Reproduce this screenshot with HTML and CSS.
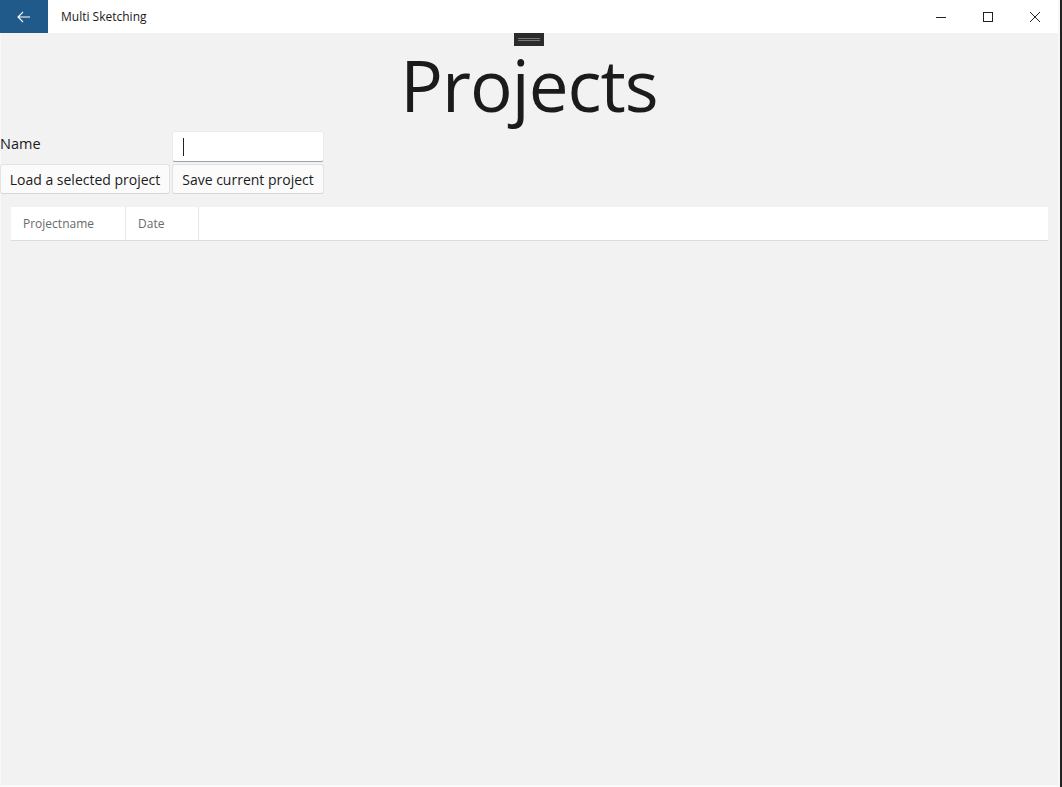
FILE: index.html
```html
<!DOCTYPE html>
<html lang="en">
<head>
    <meta charset="UTF-8">
    <title>Multi Sketching</title>
    <link rel="stylesheet" href="styles.css">
</head>
<body>
    <div class="window">
        <div class="titlebar">
            <div class="back-btn">
                <svg width="14" height="12" viewBox="0 0 14 12"><path d="M6 1L1 6l5 5M1 6h12" fill="none" stroke="#fff" stroke-width="1.1"/></svg>
            </div>
            <div class="app-title">Multi Sketching</div>
            <div class="controls">
                <div class="ctl"><svg width="12" height="12" viewBox="0 0 12 12"><path d="M1 6.5h10" stroke="#222" stroke-width="1"/></svg></div>
                <div class="ctl"><svg width="12" height="12" viewBox="0 0 12 12"><rect x="1.5" y="1.5" width="9" height="9" fill="none" stroke="#222" stroke-width="1"/></svg></div>
                <div class="ctl"><svg width="12" height="12" viewBox="0 0 12 12"><path d="M1 1l10 10M11 1L1 11" stroke="#222" stroke-width="1"/></svg></div>
            </div>
        </div>
        <div class="content">
            <div class="grip"><span></span></div>
            <h1 class="heading">Projects</h1>
            <div class="form">
                <label class="name-label" for="projectName">Name</label>
                <div class="text-input"><span class="caret"></span></div>
                <button class="btn">Load a selected project</button>
                <button class="btn">Save current project</button>
            </div>
            <div class="grid-header">
                <div class="col col-name">Projectname</div>
                <div class="col col-date">Date</div>
                <div class="col col-rest"></div>
            </div>
        </div>
    </div>
</body>
</html>
```

FILE: styles.css
```css
html, body {
    margin: 0;
    padding: 0;
    height: 100%;
    background: #222;
}
.window {
    width: 1058px;
    height: 785px;
    background: #f2f2f2;
    border-right: 2px solid #f7f7f7;
    border-bottom: 2px solid #fafafa;
    font-family: "Open Sans", "Noto Sans", sans-serif;
    display: flex;
    flex-direction: column;
}
.titlebar {
    height: 33px;
    background: #fff;
    display: flex;
    align-items: center;
}
.back-btn {
    width: 48px;
    height: 33px;
    background: #1f5a8a;
    display: flex;
    align-items: center;
    justify-content: center;
}
.app-title {
    margin-left: 13px;
    font-size: 12px;
    color: #1a1a1a;
    flex: 1;
}
.controls {
    display: flex;
    height: 33px;
}
.ctl {
    width: 47px;
    display: flex;
    align-items: center;
    justify-content: center;
}
.content {
    flex: 1;
    display: flex;
    flex-direction: column;
    box-shadow: inset 1px 0 0 #f8f8f8;
}
.grip {
    align-self: center;
    width: 30px;
    height: 13px;
    background: #2b2b2b;
    display: flex;
    align-items: center;
    justify-content: center;
}
.grip span {
    width: 22px;
    height: 3px;
    border-top: 1px solid #777;
    border-bottom: 1px solid #777;
    box-sizing: border-box;
}
.heading {
    margin: -6px 0 0;
    text-align: center;
    font-weight: 400;
    font-size: 71px;
    line-height: 90px;
    color: #1b1b1b;
    letter-spacing: -1px;
}
.form {
    display: grid;
    grid-template-columns: 170px 152px;
    grid-template-rows: 31px 30px;
    column-gap: 2px;
    row-gap: 2px;
    margin-top: 1px;
}
.name-label {
    font-size: 14.5px;
    color: #1b1b1b;
    padding-top: 3px;
}
.text-input {
    height: 31px;
    background: #fff;
    border-radius: 3px;
    border: 1px solid #ececec;
    border-bottom: 1px solid #9aa4ae;
    box-sizing: border-box;
    display: flex;
    align-items: center;
    padding-left: 10px;
}
.caret {
    width: 1px;
    height: 18px;
    background: #222;
}
.btn {
    height: 30px;
    margin: 0;
    font-family: inherit;
    font-size: 14px;
    color: #1b1b1b;
    background: #fbfbfb;
    border: 1px solid #e3e3e3;
    border-bottom-color: #d6d6d6;
    border-radius: 3px;
    padding: 0;
}
.grid-header {
    margin: 13px 10px 0 11px;
    height: 34px;
    background: #fff;
    border-bottom: 1px solid #dcdcdc;
    box-sizing: border-box;
    display: flex;
}
.col {
    font-size: 12px;
    color: #6a6a6a;
    display: flex;
    align-items: center;
    padding-left: 12px;
    box-sizing: border-box;
    border-right: 1px solid #e6e6e6;
}
.col-name {
    width: 115px;
}
.col-date {
    width: 73px;
}
.col-rest {
    flex: 1;
    border-right: none;
}
```
